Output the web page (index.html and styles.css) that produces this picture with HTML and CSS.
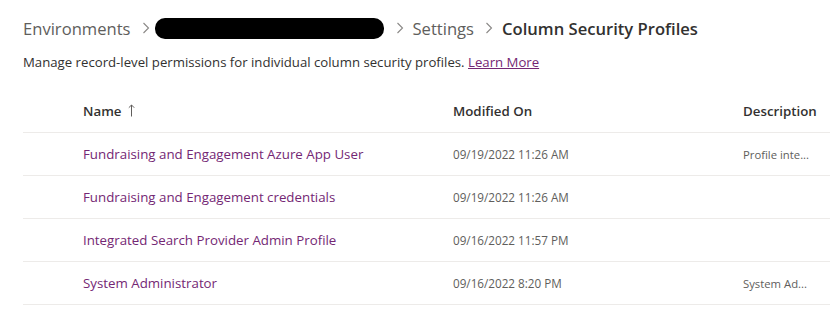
FILE: index.html
```html
<!DOCTYPE html>
<html>
<head>
<meta charset="utf-8">
<link rel="stylesheet" href="styles.css">
</head>
<body>
<div class="page">
  <nav class="crumbs">
    <span class="crumb">Environments</span>
    <span class="sep"><svg width="8" height="12" viewBox="0 0 8 12"><path d="M1.5 1 L6.5 6 L1.5 11" fill="none" stroke="#8a8886" stroke-width="1.1"/></svg></span>
    <span class="redact"></span>
    <span class="sep"><svg width="8" height="12" viewBox="0 0 8 12"><path d="M1.5 1 L6.5 6 L1.5 11" fill="none" stroke="#8a8886" stroke-width="1.1"/></svg></span>
    <span class="crumb">Settings</span>
    <span class="sep"><svg width="8" height="12" viewBox="0 0 8 12"><path d="M1.5 1 L6.5 6 L1.5 11" fill="none" stroke="#8a8886" stroke-width="1.1"/></svg></span>
    <span class="crumb current">Column Security Profiles</span>
  </nav>
  <p class="desc">Manage record-level permissions for individual column security profiles. <a class="learn" href="#">Learn More</a></p>
  <div class="grid">
    <div class="row head">
      <div class="cell check"></div>
      <div class="cell name">Name <svg class="arrow" width="7" height="13" viewBox="0 0 7 13"><path d="M3.5 12.5 V1 M0.8 3.7 L3.5 1 L6.2 3.7" fill="none" stroke="#605e5c" stroke-width="1"/></svg></div>
      <div class="cell mod">Modified On</div>
      <div class="cell descr">Description</div>
    </div>
    <div class="row">
      <div class="cell check"></div>
      <div class="cell name link">Fundraising and Engagement Azure App User</div>
      <div class="cell mod date">09/19/2022 11:26 AM</div>
      <div class="cell descr small">Profile inte...</div>
    </div>
    <div class="row">
      <div class="cell check"></div>
      <div class="cell name link">Fundraising and Engagement credentials</div>
      <div class="cell mod date">09/19/2022 11:26 AM</div>
      <div class="cell descr small"></div>
    </div>
    <div class="row">
      <div class="cell check"></div>
      <div class="cell name link">Integrated Search Provider Admin Profile</div>
      <div class="cell mod date">09/16/2022 11:57 PM</div>
      <div class="cell descr small"></div>
    </div>
    <div class="row">
      <div class="cell check"></div>
      <div class="cell name link">System Administrator</div>
      <div class="cell mod date">09/16/2022 8:20 PM</div>
      <div class="cell descr small">System Ad...</div>
    </div>
  </div>
</div>
</body>
</html>
```
FILE: styles.css
```css
* { box-sizing: border-box; }
html, body { margin: 0; padding: 0; background: #fff; }
body {
  font-family: "Open Sans", "Noto Sans", sans-serif;
  color: #323130;
  overflow: hidden;
}
.page { padding: 14px 0 0 23px; }
.crumbs {
  display: flex;
  align-items: center;
  height: 28px;
  font-size: 16.6px;
  color: #605e5c;
}
.crumb { white-space: nowrap; }
.crumb.current { color: #323130; font-weight: 600; }
.sep { display: flex; align-items: center; margin: 0 9px 0 11px; }
.redact {
  display: inline-block;
  width: 229px;
  height: 21px;
  background: #000;
  border-radius: 10px;
  margin-left: -4px;
  margin-right: 1px;
}
.desc {
  margin: 7px 0 0 0;
  font-size: 13.2px;
  line-height: 26px;
  color: #323130;
}
.learn { color: #742774; text-decoration: underline; }
.grid { margin-top: 14px; }
.row {
  display: grid;
  grid-template-columns: 60px 370px 290px 1fr;
  height: 43px;
  align-items: center;
  border-bottom: 1px solid #edebe9;
  font-size: 13.3px;
}
.row.head { height: 44px; font-weight: 600; color: #323130; }
.arrow { vertical-align: -1px; margin-left: 3px; }
.cell { white-space: nowrap; overflow: hidden; }
.link { color: #742774; }
.date { color: #605e5c; font-size: 11.7px; }
.small { color: #605e5c; font-size: 11.3px; }
```
